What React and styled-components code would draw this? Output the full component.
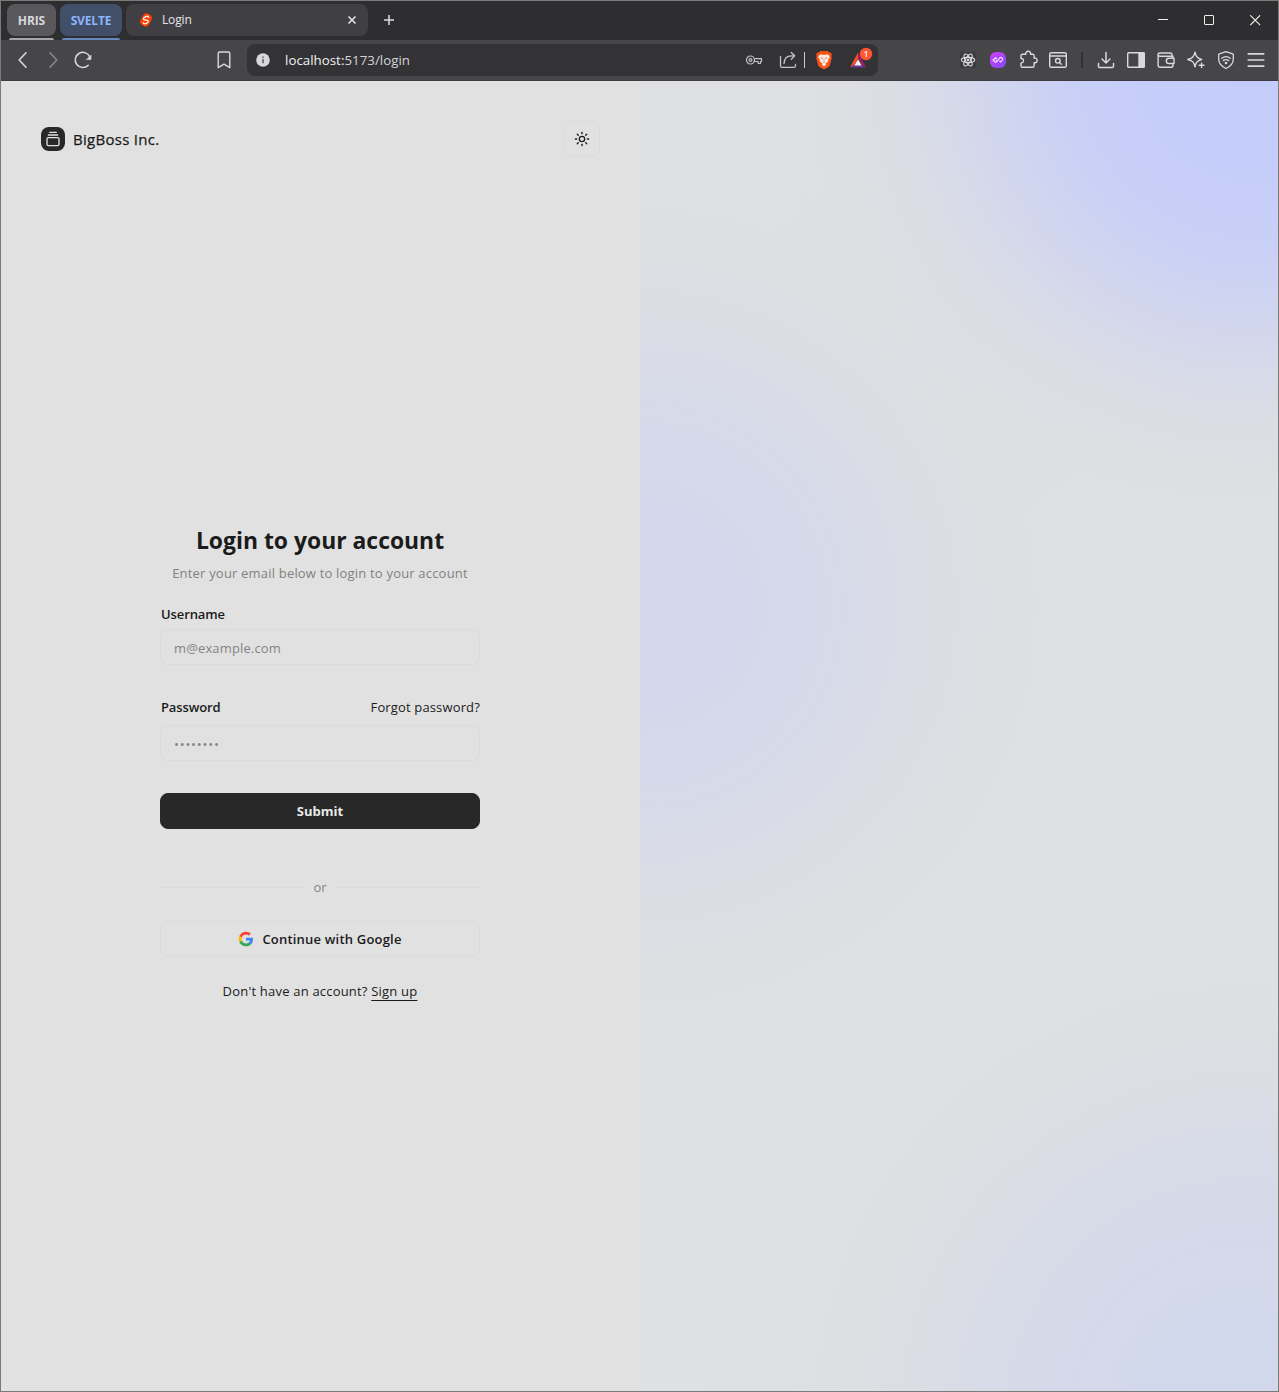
import React from "react";
import styled, { createGlobalStyle } from "styled-components";
import { GalleryVerticalEnd, Sun } from "lucide-react";

const GlobalStyle = createGlobalStyle`
  * { box-sizing: border-box; }
  body { margin: 0; background: #e1e1e1; }
  body, button, input { font-family: "Open Sans", "Noto Sans", sans-serif; }
  button { border: 0; padding: 0; background: none; color: inherit; }
  svg { display: block; flex: none; }
`;

/* ---------- window chrome ---------- */

const Window = styled.div`
  display: flex;
  flex-direction: column;
  width: 1279px;
  height: 1392px;
  border: 1px solid #7b7b7b;
  overflow: hidden;
`;

const TabStrip = styled.div`
  display: flex;
  align-items: flex-start;
  height: 39px;
  padding: 3px 0 0 6px;
  background: #2e2e30;
`;

const TabGroup = styled.div`
  display: flex;
  flex-direction: column;
  align-items: center;
  width: ${(p) => p.$width}px;
  margin-right: 4px;
  &::after {
    content: "";
    width: calc(100% - 4px);
    height: 2px;
    margin-top: 2px;
    border-radius: 2px 2px 0 0;
    background: ${(p) => p.$line};
  }
`;

const GroupChip = styled.div`
  width: 100%;
  height: 32px;
  border-radius: 8px;
  background: ${(p) => p.$bg};
  color: ${(p) => p.$fg};
  font-size: 12px;
  font-weight: 700;
  line-height: 33px;
  text-align: center;
  letter-spacing: ${(p) => p.$track || 0}px;
`;

const Tab = styled.div`
  display: flex;
  align-items: center;
  width: 242px;
  height: 32px;
  padding: 0 10px 0 12px;
  border-radius: 8px;
  background: #404044;
  color: #e4e4e6;
`;

const TabTitle = styled.span`
  flex: 1;
  margin-left: 8px;
  font-size: 12px;
  line-height: 16px;
  letter-spacing: -0.15px;
`;

const NewTab = styled.button`
  display: flex;
  margin: 8px 0 0 13px;
`;

const WindowButtons = styled.div`
  display: flex;
  margin: 0 0 0 auto;
`;

const WindowButton = styled.button`
  display: flex;
  align-items: center;
  justify-content: center;
  width: 46px;
  height: 32px;
`;

const Toolbar = styled.div`
  display: flex;
  align-items: center;
  height: 41px;
  padding: 0 7px 1px;
  background: #464649;
  border-bottom: 1px solid #3e3b41;
`;

const IconCell = styled.button`
  display: flex;
  flex: none;
  align-items: center;
  justify-content: center;
  width: 30px;
  height: 30px;
  margin-left: ${(p) => p.$gap || 0}px;
`;

const AddressBar = styled.div`
  display: flex;
  flex: none;
  align-items: center;
  width: 631px;
  height: 32px;
  margin: 0 75px 0 8px;
  padding: 0 4px 0 9px;
  border-radius: 8px;
  background: #333336;
`;

const Url = styled.span`
  flex: 1;
  margin-left: 15px;
  color: #d4d4d7;
  font-size: 13.3px;
  line-height: 20px;
  letter-spacing: 0.02px;
  b { color: #f1f1f3; font-weight: 400; }
`;

const BarDivider = styled.span`
  width: 1px;
  height: 16px;
  margin-left: 1px;
  background: #c9c9cc;
`;

const ToolDivider = styled.span`
  width: 2px;
  height: 16px;
  margin: 0 8px;
  background: #303032;
`;

const ReactTile = styled.span`
  display: flex;
  align-items: center;
  justify-content: center;
  width: 16px;
  height: 16px;
  background: #3c3c3e;
`;

/* ---------- page ---------- */

const Page = styled.main`
  display: grid;
  grid-template-columns: 639px 638px;
  flex: 1;
  background: #e1e1e1;
`;

const FormSide = styled.section`
  display: flex;
  flex-direction: column;
  gap: 16px;
  padding: 40px;
`;

const Header = styled.header`
  display: flex;
  align-items: center;
  justify-content: space-between;
`;

const Brand = styled.div`
  display: flex;
  align-items: center;
  gap: 8px;
  color: #1b1b1b;
  font-size: 15px;
  line-height: 24px;
  letter-spacing: 0.28px;
  -webkit-text-stroke: 0.25px #1b1b1b;
`;

const BrandMark = styled.span`
  display: flex;
  align-items: center;
  justify-content: center;
  width: 24px;
  height: 24px;
  border-radius: 8px;
  background: #282828;
  color: #e1e1e1;
`;

const ThemeButton = styled.button`
  display: flex;
  align-items: center;
  justify-content: center;
  width: 36px;
  height: 36px;
  border: 1px solid #dbdbdb;
  border-radius: 8px;
  color: #1b1b1b;
`;

const FormArea = styled.div`
  display: flex;
  flex: 1;
  align-items: center;
  justify-content: center;
  padding-right: 1px;
`;

const Form = styled.form`
  display: flex;
  flex-direction: column;
  width: 320px;
  color: #1b1b1b;
  font-size: 13px;
  line-height: 20px;
`;

const Title = styled.h1`
  margin: 0;
  padding-top: 1px;
  font-size: 22.9px;
  font-weight: 700;
  line-height: 31px;
  text-align: center;
  white-space: nowrap;
`;

const Text = styled.span`
  white-space: nowrap;
  letter-spacing: ${(p) => p.$track || 0}px;
  font-weight: ${(p) => p.$weight || 400};
`;

const Subtitle = styled.p`
  margin: 7px 0 21px;
  color: #818181;
  text-align: center;
  white-space: nowrap;
`;

const LabelRow = styled.div`
  display: flex;
  align-items: center;
  justify-content: space-between;
  padding: 0 0 0 1px;
`;

const Input = styled.input`
  width: 100%;
  height: 36px;
  margin: ${(p) => p.$top}px 0 32px;
  padding: 2px 12px 0 13px;
  border: 1px solid #dbdbdb;
  border-radius: 8px;
  outline: 0;
  background: transparent;
  font-size: 13px;
  letter-spacing: ${(p) => p.$track}px;
  &::placeholder { color: #848484; opacity: 1; }
`;

const WideButton = styled.button`
  display: flex;
  align-items: center;
  justify-content: center;
  gap: 8px;
  height: 36px;
  border: 1px solid ${(p) => (p.$solid ? "#282828" : "#dbdbdb")};
  border-radius: 8px;
  background: ${(p) => (p.$solid ? "#282828" : "transparent")};
  color: ${(p) => (p.$solid ? "#e8e8e8" : "#1b1b1b")};
  font-size: 13px;
  line-height: 20px;
`;

const Or = styled.div`
  display: flex;
  align-items: center;
  gap: 8px;
  margin: 48px 0 24px;
  color: #848484;
  &::before, &::after {
    content: "";
    flex: 1;
    height: 1px;
    margin-top: 1px;
    background: #dbdbdb;
  }
`;

const SignUp = styled.p`
  margin: 24px 0 0;
  text-align: center;
  a {
    color: inherit;
    text-decoration: underline;
    text-underline-offset: 4px;
    text-decoration-thickness: 1px;
    text-decoration-skip-ink: none;
  }
`;

/* A soft disc: [offset, opacity] pairs follow the falloff of a blurred circle. */
const falloff = [
  [-2.6, 1], [-2, 0.98], [-1.5, 0.93], [-1, 0.84], [-0.5, 0.69], [0, 0.5],
  [0.5, 0.31], [1, 0.16], [1.5, 0.07], [2, 0.025], [2.7, 0],
];
const disc = (x, y, radius, spread, rgb, strength) =>
  `radial-gradient(circle at ${x}px ${y}px, ${falloff
    .map(([t, a]) => `rgba(${rgb}, ${(a * strength).toFixed(3)}) ${radius + t * spread}px`)
    .join(", ")})`;

const Artwork = styled.section`
  background:
    ${disc(616, -24, 268, 92, "196, 204, 251", 1)},
    ${disc(0, 525, 240, 105, "210, 215, 237", 1)},
    ${disc(605, 1336, 280, 105, "210, 216, 236", 1)},
    #dfe0e1;
`;

/* ---------- drawings ---------- */

const Line = ({ size = 20, children, color = "#d9d9dc", w = 1.4 }) => (
  <svg width={size} height={size} viewBox="0 0 20 20" fill="none" stroke={color} strokeWidth={w} strokeLinecap="round" strokeLinejoin="round">
    {children}
  </svg>
);

const SvelteMark = () => (
  <svg width="16" height="16" viewBox="0 0 16 16">
    <rect x="3.2" y="1.600" width="9.6" height="12.800" rx="4" transform="rotate(28 8 8)" fill="#ff3e00" />
    <path d="M10.7 5.3C9.9 4 8.5 4 7.6 4.6L6 5.7C5 6.4 5.3 7.6 6.6 7.9l2.5.5c1.4.3 1.5 1.5.6 2.1l-1.5 1c-1 .7-2.3.4-2.9-.8" fill="none" stroke="#fff" strokeWidth="1.3" strokeLinecap="round" />
  </svg>
);

const AtomMark = () => (
  <svg width="16" height="16" viewBox="0 0 16 16" fill="none" stroke="#dcdcde" strokeWidth="1.100">
    <ellipse cx="8" cy="8" rx="6.700" ry="2.600" />
    <ellipse cx="8" cy="8" rx="6.700" ry="2.600" transform="rotate(60 8 8)" />
    <ellipse cx="8" cy="8" rx="6.700" ry="2.600" transform="rotate(120 8 8)" />
    <circle cx="8" cy="8" r="1.300" fill="#dcdcde" stroke="none" />
  </svg>
);

const BraveMark = () => (
  <svg width="18" height="20" viewBox="0 0 18 20">
    <path d="M5.4 1h7.2l1.4 1.4 1.8.2 1 2.2-.5 1.4.5 1.6-2 7.4c-.3 1-1 1.6-1.8 2.1L9 19.600l-4-2.300c-.8-.5-1.500-1.100-1.800-2.100l-2-7.400.5-1.600-.5-1.400 1-2.200 1.800-.2z" fill="#fb5417" />
    <path d="M4.200 5 6.500 4.400 9 5l2.500-.6 2.300.6 1 2.300-1.900 2.700.3 1.600-2.600 1.900.6 1.300L9 16.400l-2.200-1.600.6-1.300-2.600-1.900.3-1.600-1.900-2.700z" fill="#f2ece8" />
    <path d="M5.900 7.500l1.700.6-.4.800zM12.100 7.500l-1.700.6.4.8zM9 8.500v2.500M7.700 11.700 9 12.500l1.300-.8" fill="none" stroke="#fb7a48" strokeWidth=".7" />
  </svg>
);

const RewardsMark = () => (
  <svg width="28" height="28" viewBox="0 0 28 28">
    <path d="M13 6.500 5 21.500l4.300-2.400L13 12.500z" fill="#ff4b24" />
    <path d="M13 6.500l8 15-4.300-2.400L13 12.500z" fill="#9e1f63" />
    <path d="M5 21.500h16l-4.300-2.500H9.300z" fill="#6a3494" />
    <path d="M13 13.200l3.700 6.200H9.300z" fill="#f0f0f2" />
    <circle cx="21" cy="8" r="6.200" fill="#ff5530" />
    <text x="21" y="10.800" textAnchor="middle" fontSize="8" fontWeight="600" fontFamily="Open Sans, sans-serif" fill="#fff">1</text>
  </svg>
);

const PurpleMark = () => (
  <svg width="16" height="16" viewBox="0 0 16 16">
    <defs>
      <linearGradient id="violet" x1="0" y1="0" x2="1" y2="1">
        <stop offset="0" stopColor="#d63cf3" />
        <stop offset="1" stopColor="#7a4bff" />
      </linearGradient>
    </defs>
    <rect width="16" height="16" rx="6" fill="url(#violet)" />
    <path d="M7 6.700 5.600 5.700 3.100 8l2.200 2.300 1.500-.5 2.700-3.700c.9-.9 1.900-.8 2.600-.1.800.9.700 1.700 0 2.400l-1.600 1.500-1.100-1M5.800 7.900l.9.900" fill="none" stroke="#f6dcff" strokeWidth="1.200" />
  </svg>
);

const GoogleMark = () => (
  <svg width="16" height="16" viewBox="0 0 24 24">
    <path d="M22.560 12.250c0-.780-.070-1.530-.200-2.250H12v4.260h5.920c-.260 1.370-1.040 2.530-2.210 3.310v2.770h3.570c2.080-1.920 3.280-4.740 3.280-8.090z" fill="#4285f4" />
    <path d="M12 23c2.970 0 5.460-.980 7.280-2.660l-3.570-2.770c-.980.660-2.230 1.060-3.710 1.060-2.860 0-5.290-1.930-6.160-4.530H2.180v2.840C3.990 20.530 7.700 23 12 23z" fill="#34a853" />
    <path d="M5.840 14.090c-.220-.660-.350-1.360-.350-2.090s.130-1.430.350-2.090V7.070H2.180C1.430 8.550 1 10.220 1 12s.430 3.450 1.180 4.930z" fill="#fbbc05" />
    <path d="M12 5.380c1.620 0 3.060.560 4.210 1.640l3.150-3.150C17.450 2.090 14.970 1 12 1 7.700 1 3.990 3.470 2.180 7.070l3.660 2.840c.870-2.600 3.300-4.530 6.160-4.530z" fill="#ff4335" />
  </svg>
);

const TabBar = () => (
  <TabStrip>
    <TabGroup $width={49} $line="#a6a5aa">
      <GroupChip $bg="#59595c" $fg="#d8d8da" $track={-0.1}>HRIS</GroupChip>
    </TabGroup>
    <TabGroup $width={62} $line="#6787bf">
      <GroupChip $bg="#424f69" $fg="#8db5fb" $track={-0.15}>SVELTE</GroupChip>
    </TabGroup>
    <Tab>
      <SvelteMark />
      <TabTitle>Login</TabTitle>
      <svg width="12" height="12" viewBox="0 0 12 12"><path d="M2.500 2.500l7 7M9.500 2.500l-7 7" stroke="#e4e4e6" strokeWidth="1.600" /></svg>
    </Tab>
    <NewTab><svg width="16" height="16" viewBox="0 0 16 16"><path d="M8 3v10M3 8h10" stroke="#dedee0" strokeWidth="1.500" /></svg></NewTab>
    <WindowButtons>
      <WindowButton><svg width="11" height="11" viewBox="0 0 11 11"><path d="M0 4.500h10" stroke="#eee" /></svg></WindowButton>
      <WindowButton><svg width="11" height="11" viewBox="0 0 11 11"><rect x=".5" y=".5" width="9" height="9" rx=".5" fill="none" stroke="#eee" /></svg></WindowButton>
      <WindowButton><svg width="11" height="11" viewBox="0 0 11 11"><path d="M.3.3l9.800 9.800M10.100.3l-9.800 9.800" stroke="#eee" strokeWidth="1.100" /></svg></WindowButton>
    </WindowButtons>
  </TabStrip>
);

const NavBar = () => (
  <Toolbar>
    <IconCell><Line w={1.6}><path d="M13 2.800 6.200 10l6.800 7.200" /></Line></IconCell>
    <IconCell><Line color="#8b8b8e" w={1.500}><path d="M7 2.800 13.800 10 7 17.200" /></Line></IconCell>
    <IconCell>
      <Line w={1.500}><path d="M15.300 15.200A7.600 7.600 0 1 1 17 7.400" /><path d="M18 5.400v4.200h-4.200z" fill="#d9d9dc" strokeWidth=".6" /></Line>
    </IconCell>
    <IconCell $gap={111}><Line><path d="M5.800 2h8.400a1.600 1.600 0 0 1 1.600 1.600v14l-5.800-3.400-5.800 3.400v-14A1.600 1.600 0 0 1 5.800 2z" /></Line></IconCell>
    <AddressBar>
      <svg width="14" height="14" viewBox="0 0 14 14"><circle cx="7" cy="7" r="6.800" fill="#d8d8db" /><path d="M7 6v4.300M7 3.500v1.600" stroke="#4a4a4d" strokeWidth="1.300" /></svg>
      <Url><b>localhost:</b>5173/login</Url>
      <IconCell>
        <Line w={1.200} color="#c4c4c7"><circle cx="6.500" cy="10" r="4" /><circle cx="6.500" cy="10" r="1.400" /><path d="M10.500 8.700h7v2.800h-1v2h-2.300v-2h-3.900" /></Line>
      </IconCell>
      <IconCell $gap={4}>
        <Line w={1.300} color="#c4c4c7"><path d="M2.500 6.500v9.300a1.600 1.600 0 0 0 1.600 1.600h11.800a1.600 1.600 0 0 0 1.600-1.600v-1.300M6 13.500c.2-4.700 3-7.700 7.500-7.700h3M13.300 2.500 16.700 5.800l-3.400 3.400" /></Line>
      </IconCell>
      <BarDivider />
      <IconCell $gap={4}><BraveMark /></IconCell>
      <IconCell $gap={5}><RewardsMark /></IconCell>
    </AddressBar>
    <IconCell><ReactTile><AtomMark /></ReactTile></IconCell>
    <IconCell><PurpleMark /></IconCell>
    <IconCell>
      <Line w={1.400}><path d="M4.800 4.300h3.100a2.400 2.400 0 1 1 4.600 0h2.100a1.500 1.500 0 0 1 1.500 1.500v2.300a2.400 2.400 0 1 1 0 4.600v3a1.500 1.500 0 0 1-1.500 1.500H4.300a1.300 1.300 0 0 1-1.300-1.300v-3c3.300.6 3.300-5 0-4.400V5.600a1.300 1.300 0 0 1 1.300-1.300z" /></Line>
    </IconCell>
    <IconCell>
      <Line><rect x="1.700" y="2.700" width="16.600" height="14.600" rx="1.600" /><path d="M2 6h16" /><circle cx="9.800" cy="10.800" r="2.300" /><path d="m11.500 12.500 1.800 1.800" /></Line>
    </IconCell>
    <ToolDivider />
    <IconCell>
      <Line w={1.500}><path d="M10 2.500v10M6 9l4 4 4-4M2.500 13.500v2.700c0 .8.400 1.200 1.200 1.200h12.600c.8 0 1.200-.4 1.200-1.200v-2.700" /></Line>
    </IconCell>
    <IconCell><Line><rect x="1.700" y="2.700" width="16.600" height="14.600" rx="1" /><path d="M13 3h5v14h-5z" fill="#d9d9dc" /></Line></IconCell>
    <IconCell>
      <Line><path d="M17 7.500V6.200H4.200C1.300 6.200 1.300 3 4.200 3H14a2 2 0 0 1 2 2v1M2.100 4.800v10.300A2.200 2.200 0 0 0 4.300 17.300h10.900A1.800 1.800 0 0 0 17 15.500v-1.200" /><path d="M18 8.300h-5.300c-3.100 0-3.100 5.200 0 5.200H18z" /></Line>
    </IconCell>
    <IconCell>
      <Line><path d="M9 2.200c1 4.500 2.300 6 6.600 7.300-4.300 1.300-5.600 2.600-6.600 7.300-1-4.700-2.300-6-7.200-7.300C6.700 8.200 8 6.700 9 2.200zM15.600 13v4.600M13.300 15.300h4.600" /></Line>
    </IconCell>
    <IconCell>
      <Line w={1.300}><path d="M10 1.600 17.300 4.200V9c0 4.500-3 7.500-7.300 9.500C5.700 16.500 2.700 13.500 2.700 9V4.200z" /><path d="M5.800 8.300c2.500-2 5.900-2 8.400 0M7.300 10.600c1.700-1.200 3.700-1.200 5.400 0" /><circle cx="10" cy="13" r=".7" fill="#d9d9dc" /></Line>
    </IconCell>
    <IconCell><Line w={1.700}><path d="M2.300 3.800h15.400M2.300 10h15.400M2.300 16.200h15.400" /></Line></IconCell>
  </Toolbar>
);

const LoginForm = () => (
  <Form>
    <Title>Login to your account</Title>
    <Subtitle><Text $track={0.19}>Enter your email below to login to your account</Text></Subtitle>
    <LabelRow><Text $weight={600} $track={-0.1}>Username</Text></LabelRow>
    <Input $top={5} $track={0.14} placeholder="m@example.com" />
    <LabelRow>
      <Text $weight={600} $track={-0.12}>Password</Text>
      <Text $track={0.15}>Forgot password?</Text>
    </LabelRow>
    <Input $top={8} $track={0.82} placeholder="••••••••" />
    <WideButton type="button" $solid><Text $weight={700}>Submit</Text></WideButton>
    <Or>or</Or>
    <WideButton type="button">
      <GoogleMark />
      <Text $weight={600} $track={0.2}>Continue with Google</Text>
    </WideButton>
    <SignUp><Text $track={0.2}>Don't have an account? <a>Sign up</a></Text></SignUp>
  </Form>
);

export default function App() {
  return (
    <>
      <GlobalStyle />
      <Window>
        <TabBar />
        <NavBar />
        <Page>
          <FormSide>
            <Header>
              <Brand>
                <BrandMark><GalleryVerticalEnd size={16} /></BrandMark>
                BigBoss Inc.
              </Brand>
              <ThemeButton type="button"><Sun size={16} /></ThemeButton>
            </Header>
            <FormArea><LoginForm /></FormArea>
          </FormSide>
          <Artwork />
        </Page>
      </Window>
    </>
  );
}
